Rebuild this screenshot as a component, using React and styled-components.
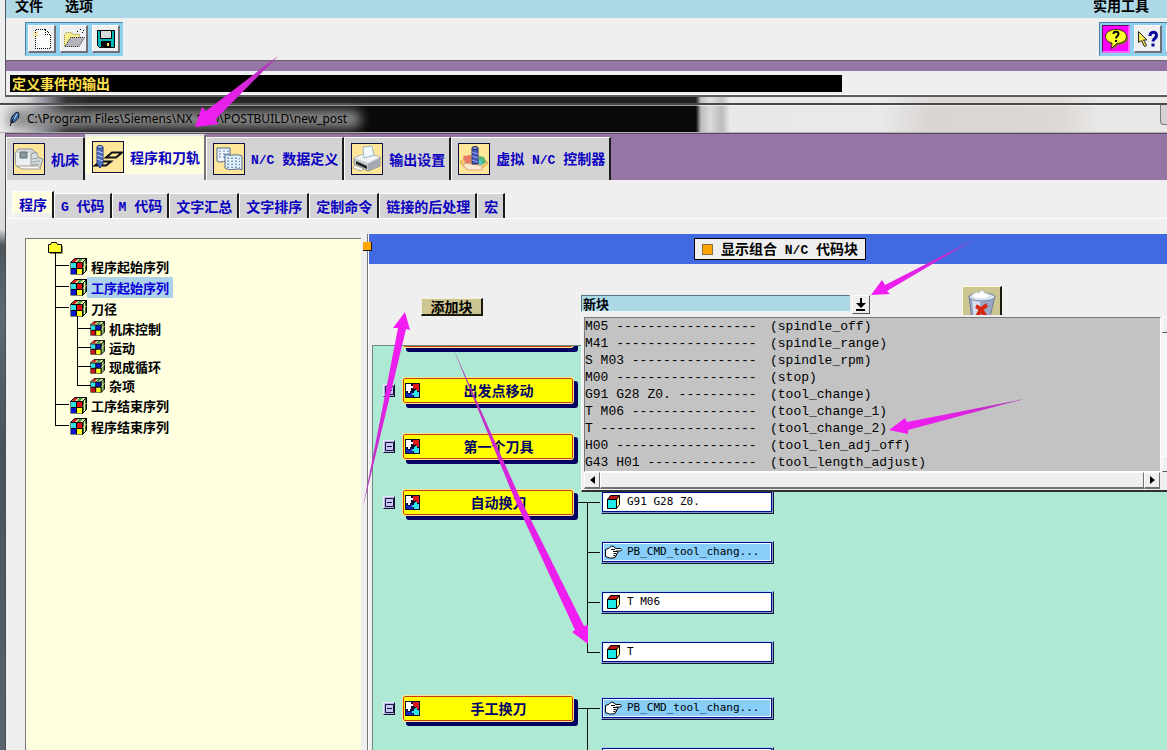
import React, { useState } from "react";
import styled, { createGlobalStyle, css } from "styled-components";

const GlobalStyle = createGlobalStyle`
  *, *::before, *::after { box-sizing: border-box; }
  html, body { margin: 0; padding: 0; }
  body {
    overflow: hidden;
    font: bold 14px/20px "Noto Sans CJK SC", sans-serif;
    color: #000;
    background: #efefef;
  }
  button, input { font: inherit; color: inherit; margin: 0; padding: 0; border-radius: 0; }
  ul { list-style: none; margin: 0; padding: 0; }
  svg { display: block; }
`;

const raised = css`
  border: solid;
  border-width: 1px 2px 2px 1px;
  border-color: #fff #707078 #707078 #fff;
`;

const Desktop = styled.div`
  position: relative;
  display: flex;
  flex-direction: column;
  height: 100vh;
  overflow: hidden;
  background: #efefef;
`;

/* ---------- main window ---------- */

const MainWindow = styled.header`
  margin-left: 5px;
  border-left: 1px solid #55585c;
  border-bottom: 2px solid #5c5c5c;
  background: #efefef;
`;

const MenuBar = styled.nav`
  display: flex;
  align-items: center;
  gap: 22px;
  height: 26px;
  margin-top: -8px;
  padding: 0 18px 0 9px;
  background: #add8e6;
`;

const MenuButton = styled.button`
  border: 0;
  background: none;
  margin-left: ${(p) => (p.$end ? "auto" : "0")};
`;

const ToolBar = styled.div`
  display: flex;
  justify-content: space-between;
  align-items: center;
  height: 43px;
  padding-left: 19px;
  border-bottom: 1px solid #6a6070;
`;

const ToolGroup = styled.div`
  display: flex;
  flex: none;
  gap: 4px;
  padding: 2px;
  border: 1px solid #8fd0ee;
  border-top-color: #4682a4;
  border-left-color: #4682a4;
  background: #8fd0ee;
  overflow: hidden;
  ${(p) => p.$cut && "width: 68px; border-right: 0;"}
`;

const ToolButton = styled.button`
  ${raised}
  display: flex;
  flex: none;
  align-items: center;
  justify-content: center;
  width: 28px;
  height: 28px;
  background: ${(p) => (p.$pressed ? "#ff00ff" : "#f0f0f0")};
  ${(p) => p.$pressed && "border-color: #5c105c #ff60ff #ff60ff #5c105c;"}
`;

const PurpleRule = styled.div`
  height: 10px;
  background: #9575a3;
`;

const MessageArea = styled.div`
  padding: 4px 4px 2px;
  border-bottom: 1px solid #fff;
`;

const Message = styled.div`
  width: 832px;
  max-width: 100%;
  height: 17px;
  padding-left: 2px;
  line-height: 16px;
  background: #000;
  color: #ffe04c;
`;

/* ---------- glass caption ---------- */

const Caption = styled.div`
  display: flex;
  flex: none;
  flex-direction: column;
  height: 36px;
  background: linear-gradient(
    to right,
    #e9e9e9 0, #d4d4d4 26px, #8d8d9c 44px, #1c1c1c 66px, #0a0a0a 90px, #0a0a0a 696px,
    #bdbdbd 701px, #dadada 710px, #bcbcbc 722px, #e8e8e8 730px, #e9e9e9 880px,
    #d9d5d3 930px, #dcd8d6 1060px, #e9e8e6 1100px
  );
`;

const CaptionEdge = styled.div`
  height: 8px;
  border-bottom: 2px solid #484848;
  background: rgba(255, 255, 255, 0.1);
  box-shadow: 0 1px 0 rgba(255, 255, 255, 0.6);
`;

const CaptionBar = styled.div`
  display: flex;
  flex: 1;
  align-items: center;
  justify-content: space-between;
  padding-left: 8px;
  border-bottom: 1px solid #b8b0bc;
`;

const CaptionTitle = styled.div`
  position: relative;
  display: flex;
  align-items: center;
  gap: 6px;
  isolation: isolate;
  font: 12px/20px "Noto Sans", sans-serif;
  &::before {
    content: "";
    position: absolute;
    z-index: -1;
    inset: 1px -14px 1px 0;
    border-radius: 8px;
    background: #8c8c8c;
    filter: blur(6px);
  }
`;

const CaptionButton = styled.button`
  align-self: flex-start;
  width: 7px;
  height: 20px;
  border: 1px solid #77787a;
  border-width: 0 0 1px 1px;
  border-bottom-left-radius: 4px;
  background: #d2d2d2;
`;

/* ---------- post window ---------- */

const PostFrame = styled.div`
  display: flex;
  flex: 1;
  min-height: 0;
  padding-left: 5px;
  background: linear-gradient(to bottom, #e4e4e4 0, #dcdcdc 96px, #4c555c 112px, #5d6a72 180px, #48525a 320px, #59646c 100%);
`;

const PostWindow = styled.main`
  display: flex;
  flex: 1;
  flex-direction: column;
  min-width: 0;
  border-left: 1px solid #4a4a50;
  border-top: 1px solid #5a4a60;
  background: #efefef;
`;

const TabBar = styled.div`
  display: flex;
  flex: none;
  align-items: flex-end;
  height: 46px;
  background: #9575a3;
`;

const SubTabBar = styled.div`
  display: flex;
  flex: none;
  align-items: flex-end;
  height: 39px;
  padding-left: 6px;
  border-bottom: 1px solid #fff;
`;

const tabBase = css`
  display: flex;
  align-items: center;
  border: solid;
  border-width: 1px 2px 0 1px;
  border-color: #fff #1c1c1c #fff #fff;
  background: #d3d3d3;
  color: #0b00c0;
  white-space: pre;
`;

const Tab = styled.button`
  ${tabBase}
  gap: 6px;
  height: 43px;
  padding: 0 4px 0 6px;
  ${(p) =>
    p.$active &&
    css`
      height: 46px;
      padding-bottom: 2px;
      border-color: #efefef #77717c #efefef #efefef;
      background: linear-gradient(#ffffe0, #ffffe0) 0 1px / 100% 38px no-repeat #efefef;
    `}
`;

const SubTab = styled.button`
  ${tabBase}
  height: 25px;
  padding: 0 5px 0 6px;
  ${(p) =>
    p.$active &&
    css`
      height: 27px;
      padding-bottom: 3px;
      background: linear-gradient(#ffffe0, #ffffe0) 0 0 / 100% 21px no-repeat #efefef;
    `}
`;

const TabIcon = styled.span`
  flex: none;
  width: 32px;
  height: 32px;
  border: 1px solid #101040;
  background: #fde69a;
`;

const Latin = styled.span`
  font-family: "Liberation Mono", monospace;
  font-size: 13px;
`;

const Panes = styled.div`
  display: flex;
  flex: 1;
  min-height: 0;
  padding: 15px 0 0 19px;
`;

/* ---------- sequence tree ---------- */

const TreePane = styled.section`
  flex: none;
  width: 336px;
  margin-top: 4px;
  padding: 2px 0 0 22px;
  border: solid #77787a;
  border-width: 1px 0 0 1px;
  background: #ffffe0;
`;

const Branches = styled.ul`
  margin-left: 7px;
  margin-top: ${(p) => (p.$root ? "2px" : "0")};
`;

const TreeRow = styled.div`
  display: flex;
  align-items: center;
  height: ${(p) => (p.$nested ? "19px" : "21px")};
  font-size: 13px;
  line-height: 19px;
`;

const TreeLabel = styled.button`
  height: 100%;
  padding: 0 4px;
  border: 0;
  background: ${(p) => (p.$selected ? "#add2ec" : "none")};
  color: ${(p) => (p.$selected ? "#0b00d8" : "#000")};
`;

const TreeItem = styled.li`
  position: relative;
  padding-left: ${(p) => (p.$nested ? "13px" : "15px")};
  &::before {
    content: "";
    position: absolute;
    left: 0;
    top: 9px;
    width: 14px;
    height: 1px;
    background: #000;
  }
  &::after {
    content: "";
    position: absolute;
    left: 0;
    top: -3px;
    bottom: 0;
    width: 1px;
    background: #000;
  }
  &:last-child::after { bottom: auto; height: 13px; }
`;

/* ---------- sash ---------- */

const Sash = styled.div`
  position: relative;
  z-index: 1;
  flex: none;
  width: 8px;
  border-right: 1px solid #fff;
  box-shadow: inset -1px 0 0 #77787a;
`;

const SashGrip = styled.button`
  position: absolute;
  top: 8px;
  left: 2px;
  width: 9px;
  height: 9px;
  border: solid;
  border-width: 0 1px 1px 0;
  border-color: #201800;
  background: #ffa500;
`;

/* ---------- work pane ---------- */

const WorkPane = styled.section`
  position: relative;
  display: flex;
  flex: 1;
  flex-direction: column;
  min-width: 0;
`;

const Banner = styled.div`
  display: flex;
  flex: none;
  align-items: center;
  justify-content: center;
  height: 30px;
  padding-left: 24px;
  background: #4169e1;
`;

const Toggle = styled.label`
  display: flex;
  align-items: center;
  gap: 8px;
  height: 22px;
  padding: 0 7px;
  border: 1px solid #000;
  background: #efefef;
  white-space: pre;
`;

const CheckBox = styled.input`
  appearance: none;
  width: 11px;
  height: 11px;
  border: 1px solid #8a7040;
  background: #efefef;
  &:checked { background: #ffa500; }
`;

const Controls = styled.div`
  display: flex;
  flex: none;
  align-items: flex-start;
  height: 81px;
  padding: 22px 0 0 52px;
`;

const AddButton = styled.button`
  height: 18px;
  width: 62px;
  margin: 12px 98px 0 0;
  border: solid;
  border-width: 1px 2px 2px 1px;
  border-color: #f4f0d8 #1c1a10 #1c1a10 #f4f0d8;
  background: #cdc592;
  line-height: 15px;
`;

const Combo = styled.div`
  display: flex;
  gap: 2px;
  margin: 9px 92px 0 0;
`;

const ComboInput = styled.input`
  width: 269px;
  height: 17px;
  padding-left: 1px;
  border: solid;
  border-width: 1px;
  border-color: #507888 #add8e6 #e8f4f8 #507888;
  background: #add8e6;
  font-size: 13px;
`;

const ComboArrow = styled.button`
  display: flex;
  align-items: center;
  justify-content: center;
  width: 18px;
  height: 19px;
  border: solid;
  border-width: 1px;
  border-color: #fff #555 #555 #fff;
  background: #efefef;
`;

const TrashButton = styled.button`
  width: 40px;
  height: 40px;
  border: solid;
  border-width: 1px 2px 2px 1px;
  border-color: #fffbe0 #1c1a10 #1c1a10 #fffbe0;
  background: #cdc592;
`;

const Popup = styled.div`
  position: absolute;
  z-index: 2;
  top: 81px;
  left: 212px;
  right: 0;
  display: grid;
  grid-template-columns: 1fr 6px;
  padding: 2px 0 1px 2px;
  border-left: 1px solid #fafafa;
  border-bottom: 2px solid #303030;
  background: #efefef;
`;

const OptionList = styled.ul`
  border: solid;
  border-width: 1px 1px 1px 1px;
  border-color: #77787a #fff #fff #77787a;
  background: #c3c3c3;
  font: 13px/17px "Liberation Mono", monospace;
`;

const OptionRow = styled.li`
  display: grid;
  grid-template-columns: 185px 1fr;
  height: 17px;
  white-space: pre;
`;

const VScroll = styled.div`
  display: flex;
  flex-direction: column;
  justify-content: space-between;
  margin-left: 1px;
  background: #f6f6f6;
`;

const HScroll = styled.div`
  display: flex;
  height: 17px;
  margin-right: 1px;
`;

const ScrollButton = styled.button`
  ${raised}
  border-right-width: 1px;
  display: flex;
  flex: none;
  align-items: center;
  justify-content: center;
  width: 16px;
  height: 17px;
  background: #efefef;
`;

const ScrollNub = styled.button`
  width: 5px;
  height: 16px;
  border: solid;
  border-width: 1px 0 1px 1px;
  border-color: #fff #555 #555 #fff;
  background: #efefef;
`;

const ScrollThumb = styled.div`
  ${raised}
  border-right-width: 1px;
  flex: 1;
  background: #efefef;
`;

/* ---------- event canvas ---------- */

const EventCanvas = styled.div`
  flex: 1;
  min-height: 0;
  margin-left: 3px;
  border: solid #6c8a7e;
  border-width: 1px 0 0 1px;
  background: #aeead3;
  overflow: hidden;
`;

const EventList = styled.ul`
  margin-top: -37px;
  padding-left: 10px;
`;

const EventGroup = styled.li`
  display: flex;
  align-items: flex-start;
  padding-bottom: 6px;
`;

const EventCell = styled.div`
  display: flex;
  flex: none;
  align-items: center;
  gap: 7px;
  height: 50px;
`;

const Collapse = styled.button`
  display: flex;
  align-items: center;
  justify-content: center;
  width: 12px;
  height: 13px;
  border: solid;
  border-width: 1px 1px 1px 1px;
  border-color: #e8e8ff #101030 #101030 #e8e8ff;
  background: #b8b8e8;
`;

const EventButton = styled.button`
  display: flex;
  align-items: center;
  width: 172px;
  height: 27px;
  padding: 0 2px;
  border: 1px solid #ffe68a;
  border-radius: 3px;
  background: #ffff00;
  color: #00006a;
  box-shadow: inset 0 0 0 1px #c83c10, 4px 4px 0 #000060;
`;

const EventName = styled.span`
  flex: 1;
  padding-left: 6px;
`;

const BlockList = styled.ul`
  position: relative;
  flex: none;
  margin-left: 13px;
  &::before {
    content: "";
    position: absolute;
    top: 25px;
    left: -9px;
    width: 9px;
    height: 1px;
    background: #101010;
  }
`;

const BlockItem = styled.li`
  position: relative;
  display: flex;
  align-items: center;
  height: 50px;
  padding-left: 14px;
  &::before {
    content: "";
    position: absolute;
    top: 25px;
    left: 0;
    width: 13px;
    height: 1px;
    background: #101010;
  }
  &::after {
    content: "";
    position: absolute;
    top: -25px;
    left: 0;
    width: 1px;
    height: 50px;
    background: #101010;
  }
  &:first-child::after { display: none; }
`;

const BlockButton = styled.button`
  display: flex;
  align-items: center;
  gap: 5px;
  width: 173px;
  height: 23px;
  padding: 0 0 0 3px;
  border: solid;
  border-width: 1px;
  border-color: #a8d4ff #101838 #101838 #a8d4ff;
  background: ${(p) => (p.$command ? "#87cefa" : "#fff")};
  box-shadow:
    inset -1px -1px 0 #8496c8,
    inset 1px 1px 0 #00108a,
    inset -2px -2px 0 #00108a,
    inset 2px 2px 0 #f0f8ff,
    inset -3px -3px 0 #f0f8ff;
  font: 11px/16px "DejaVu Sans Mono", monospace;
  text-align: left;
`;

const ArrowLayer = styled.svg`
  position: absolute;
  z-index: 5;
  top: 0;
  left: 0;
  pointer-events: none;
`;

/* ---------- drawings ---------- */

const NewIcon = () => (
  <svg width="22" height="24" viewBox="0 0 22 24" shapeRendering="crispEdges">
    <path d="M4.500 2.500h10l5 5v14h-15z" fill="#fcfcfc" stroke="#000" strokeDasharray="1 1" />
    <path d="M14.500 2.500v5h5" fill="none" stroke="#000" strokeDasharray="1 1" />
    <path d="M2 5l5 4M7 4L3 10M1 8h7" stroke="#f0e090" />
  </svg>
);

const OpenIcon = () => (
  <svg width="24" height="22" viewBox="0 0 24 22">
    <path d="M2.500 18V6.500l2-2h5l2 2h6v3" fill="#f6f08c" stroke="#8c8440" strokeDasharray="1 1" />
    <path d="M3 18.500L8.500 9.500h14L17 18.500z" fill="#b4b4bc" stroke="#222" strokeDasharray="1 1" />
    <path d="M15 3h1v1h-1zM18 1h1v1h-1zM20 4h1v1h-1zM21 2h1v1h-1z" fill="#000" />
  </svg>
);

const SaveIcon = () => (
  <svg width="18" height="18" viewBox="0 0 18 18">
    <path d="M.5.5h17v17H2.500l-2-2z" fill="#00b8b8" stroke="#000" />
    <path d="M3.500.5h11v8h-11z" fill="#d8dcdc" stroke="#000" />
    <path d="M4 11h10v7H4z" fill="#000" />
    <path d="M10 13h2v3h-2z" fill="#f4f050" />
  </svg>
);

const BalloonIcon = () => (
  <svg width="24" height="24" viewBox="0 0 24 24">
    <path d="M13 4c6 0 11 3 11 7s-4 7-10 7l-5 5 1-5c-4-1-7-3-7-7s4-7 10-7z" fill="#8a6a30" />
    <path d="M12 2.500c6 0 10.500 3 10.500 7s-4.500 7-10 7l-5 5 .5-5.500c-4-1-6.500-3-6.500-6.500 0-4 4.500-7 10.500-7z" fill="#ffff30" stroke="#303000" />
    <path d="M9.500 7c0-3 5-3 5 0 0 2-2.500 2-2.500 4.500M12 13v2" fill="none" stroke="#000" strokeWidth="2" />
  </svg>
);

const PointerHelpIcon = () => (
  <svg width="22" height="20" viewBox="0 0 22 20">
    <path d="M1.500 2.500v11l3-2 3 6 2-1-3-5.500h3.500z" fill="#ffee50" stroke="#222" />
    <path d="M13 7c0-5 6.500-5 6.500-.5 0 3-3.500 3-3.500 6M16 14.500v3" fill="none" stroke="#0808a0" strokeWidth="3" />
  </svg>
);

const FeatherIcon = () => (
  <svg width="13" height="16" viewBox="0 0 13 16">
    <path d="M10 1c2 3 1 7-4 10l-3 1C2 8 5 2 10 1z" fill="#3c70b0" stroke="#101828" />
    <path d="M9 3C6 6 4 10 2 15" fill="none" stroke="#101010" />
    <path d="M9 3L6 8" stroke="#c8e4ff" />
  </svg>
);

const MachineIcon = () => (
  <svg width="30" height="30" viewBox="0 0 30 30">
    <path d="M1 9l3-4h14l4 4v13H2z" fill="#d4d8da" stroke="#8c9498" />
    <path d="M2 9h15v14H2z" fill="#eceff0" />
    <path d="M6 8h7v6H6z" fill="#8898a0" stroke="#606c74" />
    <path d="M17 10l5-2 3 6 4 1-3 9-9 1z" fill="#d8dcde" stroke="#8c9498" />
    <path d="M18 15l6-1M18 18l8-1M18 21l7-1" stroke="#98a0a4" />
    <path d="M2 22h22l3 3H8z" fill="#f8f8f8" stroke="#a4a090" />
  </svg>
);

const PathIcon = () => (
  <svg width="30" height="30" viewBox="0 0 30 30">
    <path d="M13 15.500L19 10.500h10l-6 5zM2 23.500L8 19.500h10l-5 4z" fill="none" stroke="#101018" strokeWidth="2" />
    <path d="M4 5h6v17l-3 4-3-4z" fill="#4c6cc0" stroke="#203078" />
    <ellipse cx="7" cy="5" rx="3" ry="1.500" fill="#a8c0f0" stroke="#203078" />
    <path d="M4 9l6 2M4 13l6 2M4 17l6 2" stroke="#b8ccf8" />
  </svg>
);

const SheetIcon = () => (
  <svg width="30" height="30" viewBox="0 0 30 30">
    <path d="M3 4h13v14c-4-3-9 2-13-1z" fill="#eef4fa" stroke="#4c6888" />
    <path d="M5 7h10M5 10h10M5 13h10" stroke="#5080b8" strokeDasharray="2 2" />
    <path d="M11 10c6 3 11-1 17 2v14c-5-3-11 2-17-2z" fill="#e4f0fa" stroke="#4c6888" />
    <path d="M13 14c5 1 8-1 13 1M13 17c5 1 8-1 13 1M13 20c5 1 8-1 13 1M13 23c5 1 8-1 13 1" fill="none" stroke="#4070a8" strokeDasharray="2 2" />
  </svg>
);

const PrinterIcon = () => (
  <svg width="30" height="30" viewBox="0 0 30 30">
    <path d="M2 14l12-5 14 4v9l-12 5-14-7z" fill="#c4c8cc" stroke="#888c94" />
    <path d="M2 14l12-5 14 4-12 6z" fill="#f0f2f4" />
    <path d="M11 3l9-1 2 9-10 3z" fill="#f4fbff" stroke="#9cb4c0" />
    <path d="M4 17l11 5v3L4 20z" fill="#202428" />
    <path d="M16 20l12-6v7l-12 5z" fill="#a4a8b0" />
    <path d="M3 21l9 4-3 2-8-3z" fill="#fff" stroke="#b0a890" />
  </svg>
);

const ControllerIcon = () => (
  <svg width="30" height="30" viewBox="0 0 30 30">
    <path d="M1 18l5-4h18l5 5-7 6H7z" fill="#fbd078" stroke="#d8a048" />
    <path d="M4 12l8-1v8H6z" fill="#e87868" />
    <path d="M20 12l5 1 2 6-7 2z" fill="#50b878" />
    <path d="M16 15l6 1 2 5-8-1z" fill="#50c8d0" />
    <path d="M5 19l14 2 4 1v4H9l-4-3z" fill="#fbe8d0" stroke="#e0a878" />
    <path d="M13 4h6v16h-6z" fill="#4858b8" stroke="#202860" />
    <ellipse cx="16" cy="4" rx="3" ry="1.500" fill="#8898e0" stroke="#202860" />
    <path d="M13 8l6 2M13 12l6 2M13 16l6 2" stroke="#98a8f0" />
  </svg>
);

const FolderIcon = () => (
  <svg width="15" height="13" viewBox="0 0 15 13">
    <path d="M.5 11.500V3.500h2l1-2h5l1 2h4v8z" fill="#ffff30" stroke="#000" />
    <path d="M2 12.500h12.500V5" fill="none" stroke="#908c60" />
  </svg>
);

const CubeIcon = ({ nested }) => {
  const size = nested ? 15 : 17;
  return (
    <svg width={size} height={size} viewBox="0 0 17 17">
      <path d="M.5 4.500l4-4h12l-4 4z" fill="#f4f4a0" stroke="#000" />
      <path d="M4 1h4l-3 3H2z" fill="#d02020" />
      <path d="M9 1h4l-3 3H7z" fill="#40a050" />
      <path d="M12.500 4.500l4-4v12l-4 4z" fill="#307030" stroke="#000" />
      <path d="M14.500 3v11M12.500 10l4-4" stroke="#f0e8a0" />
      <path d="M.5 4.500h12v12H.5z" fill="#000" />
      <path d="M1 5h5v5H1z" fill="#30e0e8" />
      <path d="M7 5h5v5H7z" fill={nested ? "#0818b0" : "#e01010"} />
      <path d="M1 11h5v5H1z" fill={nested ? "#c01818" : "#0818d0"} />
      <path d="M7 11h5v5H7z" fill="#ffff20" />
    </svg>
  );
};

const PuzzleIcon = () => (
  <svg width="15" height="15" viewBox="0 0 15 15" shapeRendering="crispEdges">
    <path d="M0 0h15v15H0z" fill="#0a0a30" />
    <path d="M8 1h6v7h-3V6H9V5H7V3h1z" fill="#d81818" />
    <path d="M1 1h5v2h2v2H6v3H5v2H3V8H1z" fill="#fff" />
    <path d="M1 9h1v2h4V9h1v2h1v3H1z" fill="#1028c0" />
    <path d="M9 8h1V7h2v2h2v5H9v-2H7v-2h2z" fill="#30e0e8" />
  </svg>
);

const BlockIcon = () => (
  <svg width="17" height="14" viewBox="0 0 17 14">
    <path d="M2.500 4.500l3-4h9l-3 4z" fill="#c01818" stroke="#000" />
    <path d="M11.500 4.500l3-4v9l-3 4z" fill="#ffffa0" stroke="#000" />
    <path d="M2.500 4.500h9v9h-9z" fill="#20e8e8" stroke="#000" />
  </svg>
);

const HandIcon = () => (
  <svg width="17" height="14" viewBox="0 0 17 14">
    <path d="M.5 4.500l3-1 3-2.500 3 1 1 1.500h5l1 1-1 1.500h-4l1.500 1-.5 1.500-1 .5v1.500l-1 .5-.5 1.500-2 .5H4.500l-4-1.500z" fill="#fff" stroke="#000" />
    <path d="M6 4.500h4M8 6.500h4M8.500 8.500h3M8.500 10.500h2" stroke="#000" />
  </svg>
);

const TrashIcon = () => (
  <svg width="37" height="37" viewBox="0 0 37 37">
    <path d="M6 9l3 25h17l6-25z" fill="#9ca8c4" stroke="#707c9c" />
    <path d="M9 11l2 22h6V11z" fill="#d8e0f0" />
    <ellipse cx="19" cy="10" rx="13" ry="4" fill="#dce8f4" stroke="#7484a4" />
    <path d="M8 9l5-4 3 1 3-3 3 3 6 2-4 4H12z" fill="#fcfeff" stroke="#c0ccdc" />
    <path d="M13 19c4 2 7 6 10 11M24 18c-5 3-8 7-10 12" fill="none" stroke="#d82810" strokeWidth="4" />
  </svg>
);

const DropIcon = () => (
  <svg width="10" height="13" viewBox="0 0 10 13">
    <path d="M4 0h2v5h4L5 10 0 5h4zM0 11h9v2H0z" fill="#000" />
  </svg>
);

const Minus = () => (
  <svg width="9" height="9" viewBox="0 0 9 9">
    <path d="M.5.5h8v8h-8z" fill="#c8c8f4" stroke="#14143c" />
    <path d="M2 4h5v1H2z" fill="#14143c" />
  </svg>
);

const Triangle = ({ left }) => (
  <svg width="5" height="8" viewBox="0 0 5 8">
    <path d={left ? "M5 0v8L0 4z" : "M0 0v8l5-4z"} fill="#000" />
  </svg>
);

/* ---------- data ---------- */

const TABS = [
  { icon: MachineIcon, parts: ["机床"] },
  { icon: PathIcon, parts: ["程序和刀轨"] },
  { icon: SheetIcon, parts: ["", "N/C ", "数据定义"] },
  { icon: PrinterIcon, parts: ["输出设置"] },
  { icon: ControllerIcon, parts: ["虚拟", " N/C ", "控制器"] },
];

const SUB_TABS = [
  ["程序"],
  ["", "G ", "代码"],
  ["", "M ", "代码"],
  ["文字汇总"],
  ["文字排序"],
  ["定制命令"],
  ["链接的后处理"],
  ["宏"],
];

const TREE = [
  { name: "程序起始序列" },
  { name: "工序起始序列" },
  { name: "刀径", children: ["机床控制", "运动", "现成循环", "杂项"] },
  { name: "工序结束序列" },
  { name: "程序结束序列" },
];

const OPTIONS = [
  ["M05", "spindle_off"],
  ["M41", "spindle_range"],
  ["S M03", "spindle_rpm"],
  ["M00", "stop"],
  ["G91 G28 Z0.", "tool_change"],
  ["T M06", "tool_change_1"],
  ["T", "tool_change_2"],
  ["H00", "tool_len_adj_off"],
  ["G43 H01", "tool_length_adjust"],
];

const EVENTS = [
  { name: "", blocks: [] },
  { name: "出发点移动", blocks: [] },
  { name: "第一个刀具", blocks: [] },
  { name: "自动换刀", blocks: ["G91 G28 Z0.", "PB_CMD_tool_chang...", "T M06", "T"] },
  { name: "手工换刀", blocks: ["PB_CMD_tool_chang...", "PB_CMD_tool_chang..."] },
];

const ARROWS = [
  { tail: [278, 56], tip: [195, 127], points: "278,56 206,111 202,107 195,127 219,124 215,120" },
  { tail: [973, 240], tip: [871, 295], points: "973,240 885,285 882,280 871,295 890,294 887,291" },
  { tail: [1024, 399], tip: [889, 430], points: "1024,399 907,422 905,418 889,430 908,434 908,430" },
  { tail: [363, 507], tip: [405, 312], points: "363,507 384,400 398,328 393,328 405,312 410,330 406,329 389,400" },
  { tail: [453, 348], tip: [588, 644], points: "453,348 515,500 575,630 572,632 588,644 588,625 584,626 521,500" },
];

const Mixed = ({ parts: [before, latin, after] }) => (
  <span>
    {before}
    {latin && <Latin>{latin}</Latin>}
    {after}
  </span>
);

const TreeNode = ({ node, nested, selected, onSelect }) => (
  <TreeItem $nested={nested}>
    <TreeRow $nested={nested}>
      <CubeIcon nested={nested} />
      <TreeLabel $selected={selected === node.name} onClick={() => onSelect(node.name)}>
        {node.name}
      </TreeLabel>
    </TreeRow>
    {node.children && (
      <Branches>
        {node.children.map((name) => (
          <TreeNode key={name} node={{ name }} nested selected={selected} onSelect={onSelect} />
        ))}
      </Branches>
    )}
  </TreeItem>
);

export default function App() {
  const [tab, setTab] = useState(1);
  const [subTab, setSubTab] = useState(0);
  const [selected, setSelected] = useState("工序起始序列");

  return (
    <Desktop>
      <GlobalStyle />
      <MainWindow>
        <MenuBar>
          <MenuButton>文件</MenuButton>
          <MenuButton>选项</MenuButton>
          <MenuButton $end>实用工具</MenuButton>
        </MenuBar>
        <ToolBar>
          <ToolGroup>
            <ToolButton aria-label="新建"><NewIcon /></ToolButton>
            <ToolButton aria-label="打开"><OpenIcon /></ToolButton>
            <ToolButton aria-label="保存"><SaveIcon /></ToolButton>
          </ToolGroup>
          <ToolGroup $cut>
            <ToolButton $pressed aria-label="气泡提示"><BalloonIcon /></ToolButton>
            <ToolButton aria-label="关联帮助"><PointerHelpIcon /></ToolButton>
            <ToolButton aria-label="手册" />
          </ToolGroup>
        </ToolBar>
        <PurpleRule />
        <MessageArea>
          <Message role="status">定义事件的输出</Message>
        </MessageArea>
      </MainWindow>

      <Caption>
        <CaptionEdge />
        <CaptionBar>
          <CaptionTitle>
            <FeatherIcon />
            C:\Program Files\Siemens\NX 12.0\POSTBUILD\new_post
          </CaptionTitle>
          <CaptionButton aria-label="最小化" />
        </CaptionBar>
      </Caption>

      <PostFrame>
        <PostWindow>
          <TabBar role="tablist">
            {TABS.map(({ icon: Icon, parts }, i) => (
              <Tab key={i} role="tab" aria-selected={tab === i} $active={tab === i} onClick={() => setTab(i)}>
                <TabIcon><Icon /></TabIcon>
                <Mixed parts={parts} />
              </Tab>
            ))}
          </TabBar>
          <SubTabBar role="tablist">
            {SUB_TABS.map((parts, i) => (
              <SubTab key={i} role="tab" aria-selected={subTab === i} $active={subTab === i} onClick={() => setSubTab(i)}>
                <Mixed parts={parts} />
              </SubTab>
            ))}
          </SubTabBar>

          <Panes>
            <TreePane>
              <FolderIcon />
              <Branches $root>
                {TREE.map((node) => (
                  <TreeNode key={node.name} node={node} selected={selected} onSelect={setSelected} />
                ))}
              </Branches>
            </TreePane>
            <Sash>
              <SashGrip aria-label="调整宽度" />
            </Sash>
            <WorkPane>
              <Banner>
                <Toggle>
                  <CheckBox type="checkbox" defaultChecked />
                  <Mixed parts={["显示组合", " N/C ", "代码块"]} />
                </Toggle>
              </Banner>
              <Controls>
                <AddButton>添加块</AddButton>
                <Combo>
                  <ComboInput aria-label="块" defaultValue="新块" />
                  <ComboArrow aria-label="展开"><DropIcon /></ComboArrow>
                </Combo>
                <TrashButton aria-label="删除"><TrashIcon /></TrashButton>
              </Controls>
              <Popup>
                <OptionList role="listbox" aria-label="块列表">
                  {OPTIONS.map(([code, name]) => (
                    <OptionRow key={name} role="option" aria-selected={false}>
                      <span>{`${code} `.padEnd(22, "-")}</span>
                      <span>({name})</span>
                    </OptionRow>
                  ))}
                </OptionList>
                <VScroll>
                  <ScrollNub aria-label="向上" />
                  <ScrollNub aria-label="向下" />
                </VScroll>
                <HScroll>
                  <ScrollButton aria-label="向左"><Triangle left /></ScrollButton>
                  <ScrollThumb />
                  <ScrollButton aria-label="向右"><Triangle /></ScrollButton>
                </HScroll>
              </Popup>
              <EventCanvas>
                <EventList>
                  {EVENTS.map((event, i) => (
                    <EventGroup key={i}>
                      <EventCell>
                        <Collapse aria-label="折叠"><Minus /></Collapse>
                        <EventButton aria-label={event.name || "事件"}>
                          <PuzzleIcon />
                          <EventName>{event.name}</EventName>
                        </EventButton>
                      </EventCell>
                      {event.blocks.length > 0 && (
                        <BlockList>
                          {event.blocks.map((block, j) => {
                            const command = block.startsWith("PB_CMD");
                            return (
                              <BlockItem key={j}>
                                <BlockButton $command={command}>
                                  {command ? <HandIcon /> : <BlockIcon />}
                                  {block}
                                </BlockButton>
                              </BlockItem>
                            );
                          })}
                        </BlockList>
                      )}
                    </EventGroup>
                  ))}
                </EventList>
              </EventCanvas>
            </WorkPane>
          </Panes>
        </PostWindow>
      </PostFrame>

      <ArrowLayer width="1167" height="750" viewBox="0 0 1167 750" aria-hidden="true">
        <defs>
          {ARROWS.map(({ tail, tip }, i) => (
            <linearGradient key={i} id={`arrow-${i}`} gradientUnits="userSpaceOnUse" x1={tail[0]} y1={tail[1]} x2={tip[0]} y2={tip[1]}>
              <stop offset="0" stopColor="#a838b0" />
              <stop offset="0.5" stopColor="#e022e4" />
              <stop offset="1" stopColor="#f51cf5" />
            </linearGradient>
          ))}
        </defs>
        {ARROWS.map(({ points }, i) => (
          <polygon key={i} points={points} fill={`url(#arrow-${i})`} />
        ))}
      </ArrowLayer>
    </Desktop>
  );
}
